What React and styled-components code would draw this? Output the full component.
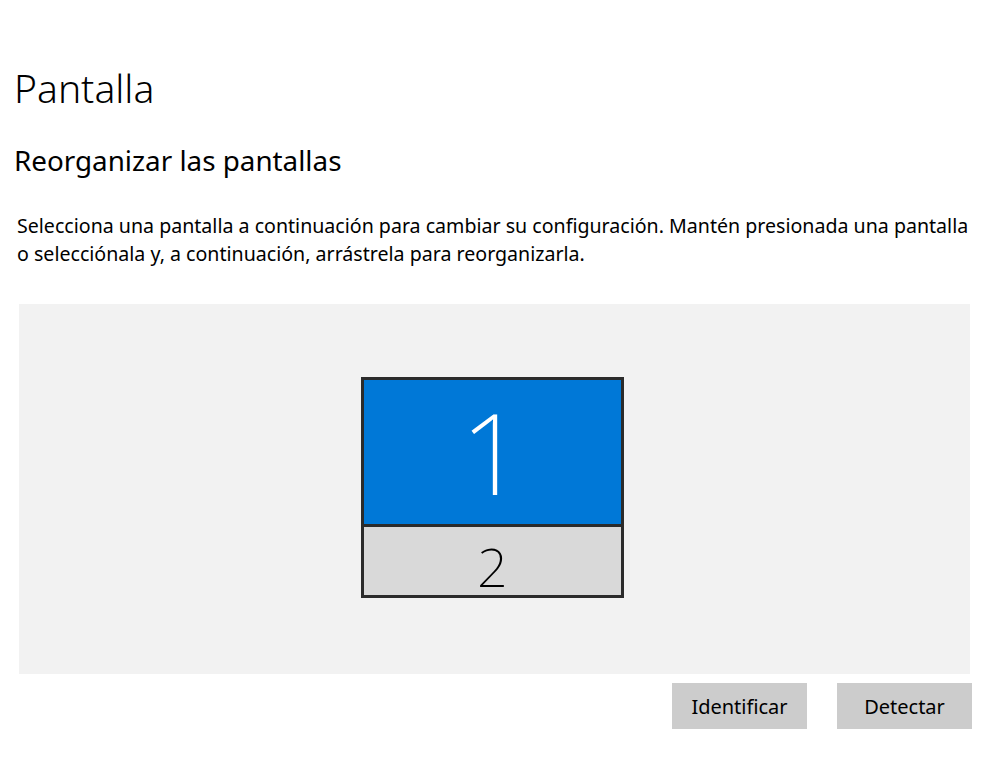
import React from 'react';
import styled, { createGlobalStyle } from 'styled-components';

const GlobalStyle = createGlobalStyle`
  body {
    margin: 0;
    background: #ffffff;
    font-family: "Noto Sans", "Open Sans", sans-serif;
    color: #000000;
  }
`;

const Page = styled.div`
  width: 986px;
  height: 778px;
  box-sizing: border-box;
  padding: 60px 14px 0 14px;
  display: flex;
  flex-direction: column;
`;

const Title = styled.h1`
  margin: 0;
  font-size: 39px;
  font-weight: 300;
  line-height: 56px;
`;

const Subtitle = styled.h2`
  margin: 26px 0 0 0;
  font-size: 27.8px;
  font-weight: 400;
  line-height: 36px;
`;

const Description = styled.p`
  margin: 34px 0 0 3px;
  font-size: 19.6px;
  line-height: 28px;
  width: 958px;
`;

const Arrangement = styled.div`
  margin: 36px 0 0 5px;
  width: 951px;
  height: 370px;
  background: #f2f2f2;
  display: flex;
  justify-content: center;
  padding: 73px 4px 0 0;
  box-sizing: border-box;
`;

const Monitors = styled.div`
  display: flex;
  flex-direction: column;
`;

const Monitor = styled.div`
  width: 263px;
  height: ${p => p.$h}px;
  box-sizing: border-box;
  border: 3px solid #2b2b2b;
  border-top-width: ${p => (p.$stacked ? 0 : 3)}px;
  background: ${p => (p.$active ? '#0078d7' : '#d9d9d9')};
  color: ${p => (p.$active ? '#ffffff' : '#000000')};
  display: flex;
  align-items: center;
  justify-content: center;
  padding-top: ${p => p.$shift}px;
  font-weight: 200;
  font-size: ${p => p.$size}px;
  line-height: 1;
`;

const Actions = styled.div`
  display: flex;
  justify-content: flex-end;
  gap: 30px;
  margin: 9px 0 0 0;
`;

const Button = styled.button`
  width: 135px;
  height: 46px;
  border: none;
  background: #cccccc;
  font-family: inherit;
  font-size: 20px;
  color: #000000;
  padding: 0;
`;

export default function App() {
  return (
    <>
      <GlobalStyle />
      <Page>
        <Title>Pantalla</Title>
        <Subtitle>Reorganizar las pantallas</Subtitle>
        <Description>
          Selecciona una pantalla a continuación para cambiar su configuración. Mantén presionada una pantalla
          o selecciónala y, a continuación, arrástrela para reorganizarla.
        </Description>
        <Arrangement>
          <Monitors>
            <Monitor $active $h={150} $size={112} $shift={0}>1</Monitor>
            <Monitor $stacked $h={71} $size={54} $shift={10}>2</Monitor>
          </Monitors>
        </Arrangement>
        <Actions>
          <Button>Identificar</Button>
          <Button>Detectar</Button>
        </Actions>
      </Page>
    </>
  );
}
